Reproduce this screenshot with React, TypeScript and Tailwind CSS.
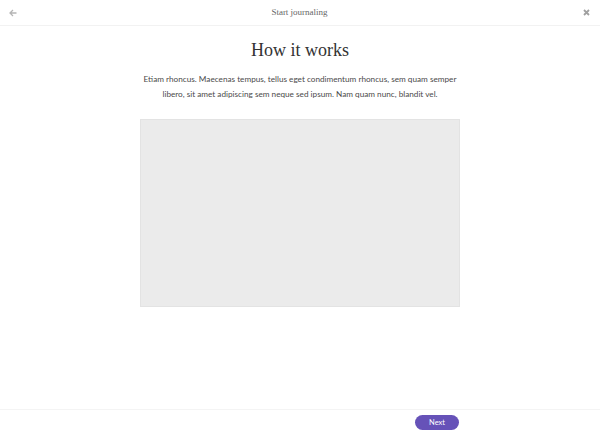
import React from 'react';

const App: React.FC = () => {
  return (
    <div className="h-[435px] w-full bg-white flex flex-col font-['Lato',sans-serif] text-[#444]">
      {/* Header */}
      <header className="h-[26px] shrink-0 border-b border-[#f2f2f2] flex items-center justify-between px-[8px]">
        <button className="w-[10px] h-[10px] flex items-center justify-center text-[#b5b5b5]">
          <svg width="8" height="8" viewBox="0 0 8 8" fill="none" stroke="currentColor" strokeWidth="1.3">
            <path d="M7.5 4H1M4 1L1 4l3 3" />
          </svg>
        </button>
        <div className="text-[9px] text-[#666] font-['Liberation_Serif',serif]">Start journaling</div>
        <button className="w-[10px] h-[10px] flex items-center justify-center text-[#a0a0a0] mr-[1px]">
          <svg width="7" height="7" viewBox="0 0 7 7" fill="none" stroke="currentColor" strokeWidth="1.8">
            <path d="M1 1l5 5M6 1L1 6" />
          </svg>
        </button>
      </header>

      {/* Main */}
      <main className="flex-1 flex flex-col items-center pt-[12px]">
        <h1 className="text-[18px] leading-[24px] text-[#333] font-['Liberation_Serif',serif]">How it works</h1>
        <p className="mt-[10px] w-[318px] text-center text-[8.2px] leading-[15px] text-[#4a4a4a]">
          Etiam rhoncus. Maecenas tempus, tellus eget condimentum rhoncus, sem quam semper libero, sit amet adipiscing sem neque sed ipsum. Nam quam nunc, blandit vel.
        </p>
        <div className="mt-[17px] w-[320px] h-[188px] bg-[#ebebeb] border border-[#e3e3e3]" />
      </main>

      {/* Footer */}
      <footer className="h-[26px] shrink-0 border-t border-[#f4f4f4] flex items-center justify-end pr-[141px]">
        <button className="w-[44px] h-[15px] rounded-full bg-[#6652b8] text-white text-[7.5px] leading-none">
          Next
        </button>
      </footer>
    </div>
  );
};

export default App;
